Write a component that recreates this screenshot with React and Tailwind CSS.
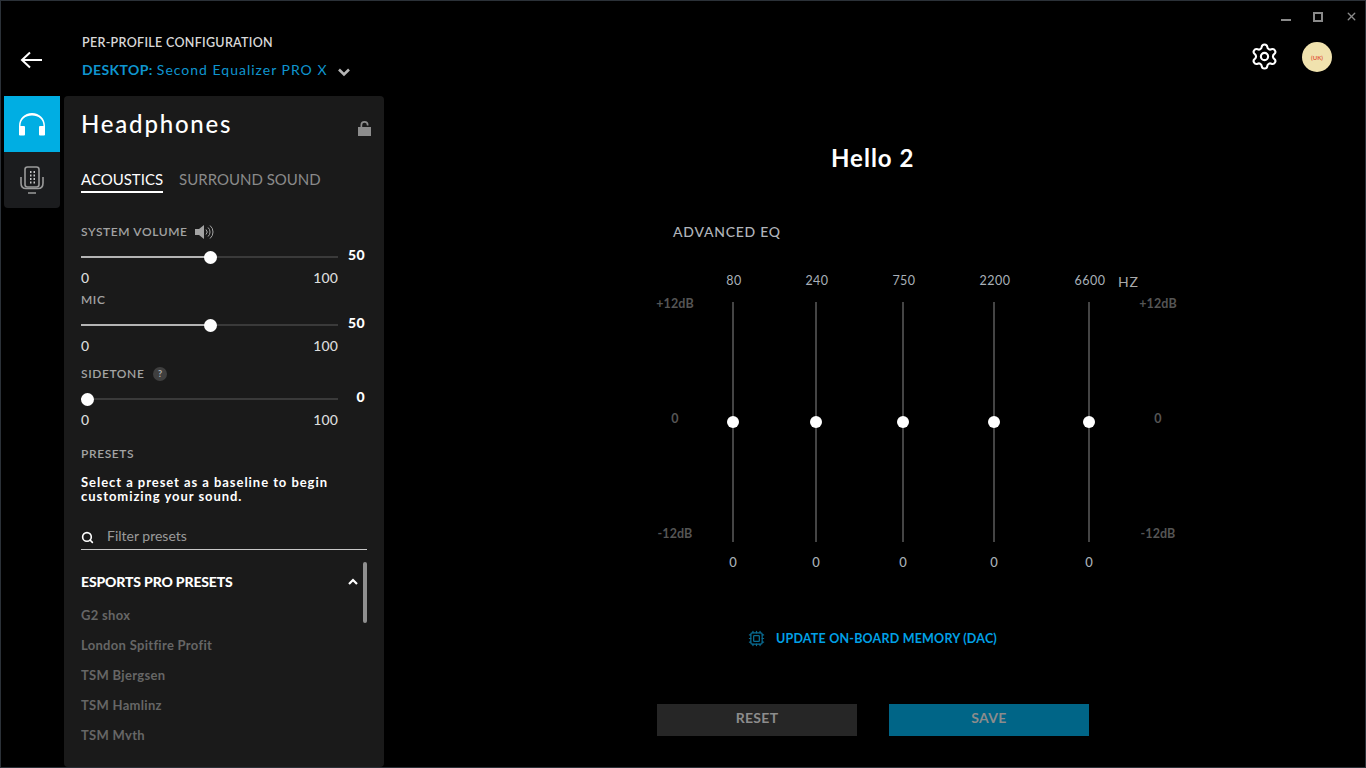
import React from "react";
import { Settings, Cpu, Search, X } from "lucide-react";

function Slider({ value, pct, className = "" }) {
  return (
    <div className={`flex items-center h-[14px] ${className}`}>
      <div className="relative w-[257px] h-[2px] bg-[#3a3a3a]">
        <div className="h-full bg-[#b4b4b4]" style={{ width: `${pct}%` }} />
        <div
          className="absolute top-[-5.5px] w-[13px] h-[13px] rounded-full bg-white -ml-[6px]"
          style={{ left: `${pct}%` }}
        />
      </div>
      <span className="w-[27px] text-right text-[14px] tracking-[0.4px] leading-none font-black text-white -translate-y-[2px]">
        {value}
      </span>
    </div>
  );
}

function Range() {
  return (
    <div className="w-[257px] flex justify-between text-[14px] tracking-[0.1px] leading-[16px] text-[#dcdcdc] font-medium">
      <span>0</span>
      <span>100</span>
    </div>
  );
}

function EqBand({ hz, className }) {
  return (
    <div className={`w-[60px] flex flex-col items-center ${className}`}>
      <span className="h-[16px] leading-[16px] translate-x-[1px] text-[12.5px] tracking-[0.5px] text-[#a9b0b8]">{hz}</span>
      <div className="relative w-[2px] h-[240px] mt-[13px] bg-[#444444]">
        <div className="absolute left-[-5px] top-[114px] w-[12px] h-[12px] rounded-full bg-white" />
      </div>
      <span className="mt-[12px] h-[16px] leading-[16px] text-[13px] font-medium text-[#a9b0b8]">0</span>
    </div>
  );
}

function DbScale({ className = "" }) {
  return (
    <div className={`w-[50px] h-[270px] pt-[23px] flex flex-col items-center text-[12.5px] tracking-[0.1px] font-bold text-[#555555] ${className}`}>
      <span className="h-[16px] leading-[16px]">+12dB</span>
      <span className="h-[16px] leading-[16px] mt-[99px]">0</span>
      <span className="h-[16px] leading-[16px] mt-[99px]">-12dB</span>
    </div>
  );
}

const presets = ["G2 shox", "London Spitfire Profit", "TSM Bjergsen", "TSM Hamlinz", "TSM Myth"];

export default function App() {
  return (
    <div className="w-[1366px] h-[768px] bg-black border border-[#2b3138] overflow-hidden flex flex-col font-['Lato',sans-serif] text-white">
      {/* header */}
      <header className="h-[95px] shrink-0 flex">
        <div className="w-[81px] shrink-0 pl-[19px] pt-[49px]">
          <svg width="22" height="20" viewBox="0 0 22 20" fill="none" stroke="white" strokeWidth="2">
            <path d="M22 10H2M10 2.500L2 10l8 7.500" />
          </svg>
        </div>
        <div className="pt-[34px]">
          <div className="text-[12.5px] leading-[16px] font-semibold tracking-[0.3px] text-[#d8d8d8]">PER-PROFILE CONFIGURATION</div>
          <div className="mt-[11px] flex items-center text-[14px] leading-[16px] text-[#0f95cf]">
            <span className="font-bold tracking-[0.4px]">DESKTOP:</span>
            <span className="ml-[4px] tracking-[1px]">Second Equalizer PRO X</span>
            <svg className="ml-[10px] mt-[5px]" width="12" height="9" viewBox="0 0 12 9" fill="none" stroke="#b5b5b5" strokeWidth="2.600">
              <path d="M1 1.500l5 5 5-5" />
            </svg>
          </div>
        </div>
        <div className="ml-auto w-[130px] flex flex-col items-end">
          <div className="h-[31px] flex items-center pr-[7px] gap-[22px] text-[#8a8a8a]">
            <div className="w-[10px] h-[2px] bg-[#8a8a8a] mt-[6px]" />
            <div className="w-[10px] h-[10px] border-2 border-[#8a8a8a]" />
            <X size={13} strokeWidth={2.500} />
          </div>
          <div className="mt-[10px] pr-[33px] flex items-center gap-[23px]">
            <Settings size={29} strokeWidth={1.750} color="white" className="-mt-[2px]" />
            <div className="w-[30px] h-[30px] rounded-full bg-[#f0e2ae] flex items-center justify-center text-[6px] font-bold text-[#e2603f]">
              (UK)
            </div>
          </div>
        </div>
      </header>

      {/* body */}
      <div className="flex-1 min-h-0 flex pl-[3px]">
        <nav className="w-[56px] h-[112px] shrink-0 bg-[#1b1c1e] rounded-b-[4px]">
          <div className="h-[56px] bg-[#00aee3] flex items-center justify-center">
            <svg width="26" height="23" viewBox="0 0 26 23" fill="white">
              <path d="M0 22V13C0 5.500 5.500 0 13 0s13 5.500 13 13v9h-1.500V13C24.500 6.500 19.500 2.500 13 2.500S1.500 6.500 1.500 13v9z" />
              <rect x="0" y="13" width="6" height="9.500" rx="1" />
              <rect x="20" y="13" width="6" height="9.500" rx="1" />
            </svg>
          </div>
          <div className="h-[56px] flex items-center justify-center">
            <svg width="24" height="29" viewBox="0 0 24 29" fill="none" stroke="#9a9a9a" strokeWidth="1.600">
              <rect x="5" y="1" width="14" height="20" rx="2.500" />
              <path d="M1 11v6c0 3.500 2 5.500 5 5.500h12c3 0 5-2 5-5.500v-6M8 27h8" />
              <path d="M10 6h1.500M13.500 6h1.500M10 9.500h1.500M13.500 9.500h1.500M10 13h1.500M13.500 13h1.500M10 16.500h1.500M13.500 16.500h1.500" stroke="#c8c8c8" strokeWidth="1.800" />
            </svg>
          </div>
        </nav>

        <aside className="ml-[4px] w-[320px] shrink-0 bg-[#1a1a1a] rounded-[4px] px-[17px] pt-[12px] flex flex-col">
          <div className="flex items-center justify-between">
            <h1 className="text-[24px] leading-[32px] font-medium tracking-[1.800px]">Headphones</h1>
            <svg className="mt-[8px] -mr-[4px]" width="13" height="15" viewBox="0 0 13 15" fill="#8c8c8c">
              <rect x="0" y="6" width="13" height="9" />
              <path d="M2.500 6V4a4 4 0 0 1 8 0v.5h-1.700V4a2.300 2.300 0 0 0-4.600 0v2z" />
            </svg>
          </div>
          <div className="mt-[27px] flex gap-[16px] text-[15px] leading-[24px]">
            <div className="h-[26px] border-b-2 border-white text-white">ACOUSTICS</div>
            <div className="text-[#8a8a8a]">SURROUND SOUND</div>
          </div>

          <div className="mt-[31px] h-[16px] flex items-center gap-[8px] text-[12px] tracking-[0.6px] font-semibold text-[#a3a3a3]">
            SYSTEM VOLUME
            <svg width="20" height="16" viewBox="0 0 20 16" fill="none">
              <path d="M0 5h4l5-4v14l-5-4H0z" fill="#a3a3a3" />
              <path d="M11 5.500a3.500 3.500 0 0 1 0 5M13 3.500a6 6 0 0 1 0 9M15 1.500a8.500 8.500 0 0 1 0 13" stroke="#a3a3a3" />
            </svg>
          </div>
          <Slider value="50" pct={50} className="mt-[10px]" />
          <div className="mt-[6px]"><Range /></div>

          <div className="mt-[6px] h-[16px] leading-[16px] text-[12px] tracking-[0.6px] font-semibold text-[#a3a3a3]">MIC</div>
          <Slider value="50" pct={50} className="mt-[10px]" />
          <div className="mt-[6px]"><Range /></div>

          <div className="mt-[12px] h-[16px] flex items-center gap-[9px] text-[12px] tracking-[0.6px] font-semibold text-[#a3a3a3]">
            SIDETONE
            <span className="w-[14px] h-[14px] rounded-full bg-[#3f3f3f] text-[#b0b0b0] text-[9px] font-bold flex items-center justify-center">?</span>
          </div>
          <Slider value="0" pct={2.300} className="mt-[10px]" />
          <div className="mt-[6px]"><Range /></div>

          <div className="mt-[18px] h-[16px] leading-[16px] text-[12px] tracking-[0.6px] font-semibold text-[#a3a3a3]">PRESETS</div>
          <p className="mt-[13px] text-[13px] leading-[14px] font-bold tracking-[0.95px] text-white">
            Select a preset as a baseline to begin<br />customizing your sound.
          </p>

          <div className="mt-[19px] w-[286px] h-[28px] border-b border-[#c8c8c8] flex items-center">
            <Search size={13} strokeWidth={3} color="white" className="mt-[3px]" />
            <span className="ml-[13px] text-[14px] text-[#9a9a9a]">Filter presets</span>
          </div>

          <div className="relative mt-[12px] w-[286px] h-[178px] overflow-hidden">
            <div className="absolute right-0 top-0 w-[4px] h-[61px] rounded-full bg-[#8f8f8f]" />
            <div className="mt-[9px] h-[20px] flex items-center justify-between pr-[9px]">
              <span className="text-[14px] font-black tracking-[-0.15px] text-white">ESPORTS PRO PRESETS</span>
              <svg width="10" height="7" viewBox="0 0 10 7" fill="none" stroke="white" strokeWidth="2.200">
                <path d="M1 6l4-4 4 4" />
              </svg>
            </div>
            <ul className="mt-[9px] text-[13px] tracking-[0.3px] font-bold text-[#666666]">
              {presets.map((p) => (
                <li key={p} className="h-[30px] leading-[30px]">{p}</li>
              ))}
            </ul>
          </div>
        </aside>

        {/* eq */}
        <main className="flex-1 min-w-0 pt-[46px]">
          <h2 className="pl-[447px] text-[24px] leading-[32px] font-bold tracking-[1px]">Hello 2</h2>
          <div className="mt-[50px] pl-[289px] h-[16px] leading-[16px] text-[14px] tracking-[0.75px] font-medium text-[#b0b4ba]">ADVANCED EQ</div>
          <div className="mt-[33px] pl-[266px] flex">
            <DbScale />
            <EqBand hz="80" className="ml-[3px]" />
            <EqBand hz="240" className="ml-[23px]" />
            <EqBand hz="750" className="ml-[27px]" />
            <EqBand hz="2200" className="ml-[31px]" />
            <EqBand hz="6600" className="ml-[35px]" />
            <div className="w-[15px] -ml-[1px] flex flex-col">
              <span className="mt-[1px] text-[14px] leading-[16px] tracking-[0.75px] text-[#a9a9a9]">HZ</span>
            </div>
            <DbScale />
          </div>
          <div className="mt-[60px] pl-[364px] flex items-center gap-[11px] text-[12.5px] leading-[16px] font-bold tracking-[0.2px] text-[#00a0e6]">
            <Cpu size={17} strokeWidth={1.750} color="#0a6d94" />
            UPDATE ON-BOARD MEMORY (DAC)
          </div>
          <div className="mt-[57px] pl-[273px] flex gap-[32px] text-[14px] font-bold tracking-[0.3px] text-[#8c8c8c]">
            <div className="w-[200px] h-[32px] pb-[5px] bg-[#262626] flex items-center justify-center">RESET</div>
            <div className="w-[200px] h-[32px] pb-[5px] bg-[#006587] flex items-center justify-center">SAVE</div>
          </div>
        </main>
      </div>
    </div>
  );
}
